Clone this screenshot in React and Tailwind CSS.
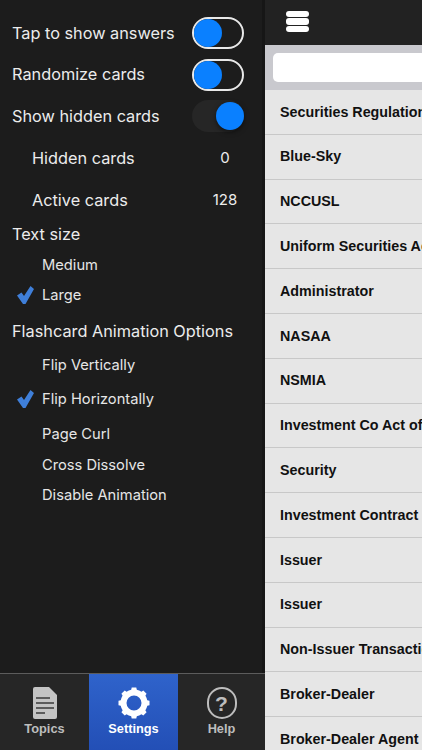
import React from 'react';

const topics = [
  'Securities Regulation',
  'Blue-Sky',
  'NCCUSL',
  'Uniform Securities Act',
  'Administrator',
  'NASAA',
  'NSMIA',
  'Investment Co Act of 1940',
  'Security',
  'Investment Contract',
  'Issuer',
  'Issuer',
  'Non-Issuer Transaction',
  'Broker-Dealer',
  'Broker-Dealer Agent',
];

const gearAngles = [0, 45, 90, 135, 180, 225, 270, 315];

const Toggle = ({ on }) =>
  on ? (
    <div className="relative h-[32px] w-[52px] rounded-full bg-[#262626]">
      <div className="absolute right-0 top-[2px] h-[28px] w-[28px] rounded-full bg-[#0a80ff] shadow-[0_2px_5px_rgba(0,0,0,0.5)]" />
    </div>
  ) : (
    <div className="relative h-[32px] w-[52px] rounded-full border-2 border-[#e8e8e8] bg-[#1c1c1c]">
      <div className="absolute left-0 top-0 h-[28px] w-[28px] rounded-full bg-[#0a80ff]" />
    </div>
  );

const Check = () => (
  <svg width="17" height="18" viewBox="0 0 17 18" className="absolute left-[17px] top-1/2 -translate-y-1/2">
    <path d="M0 9.5 L4.5 6.5 L7 10 L13.5 0 L17 3 L8.5 18 L6 18 Z" fill="#3f7fd9" />
  </svg>
);

const Option = ({ label, checked, className }) => (
  <div className={`relative flex items-center pl-[42px] text-[14.7px] text-[#e6e6e6] ${className}`}>
    {checked && <Check />}
    {label}
  </div>
);

const SwitchRow = ({ label, on, className }) => (
  <div className={`flex items-center justify-between pl-[12px] pr-[21px] ${className}`}>
    <span>{label}</span>
    <Toggle on={on} />
  </div>
);

const CountRow = ({ label, value, className }) => (
  <div className={`flex items-center pl-[32px] ${className}`}>
    <span className="flex-1">{label}</span>
    <span className="mr-[20px] w-[40px] text-center text-[15px]">{value}</span>
  </div>
);

const App = () => {
  return (
    <div className="flex h-[750px] w-[422px] overflow-hidden bg-[#1c1c1c] font-['Inter',sans-serif]">
      {/* Settings panel */}
      <div className="flex w-[265px] shrink-0 flex-col text-[16.3px] text-[#ececec] shadow-[inset_-3px_0_0_#161616]">
        <div className="flex-1 pt-[12px]">
          <SwitchRow label="Tap to show answers" className="h-[42px]" />
          <SwitchRow label="Randomize cards" className="h-[41px]" />
          <SwitchRow label="Show hidden cards" on className="h-[42px]" />
          <CountRow label="Hidden cards" value="0" className="h-[42px]" />
          <CountRow label="Active cards" value="128" className="h-[43px]" />
          <div className="flex h-[24px] items-center pl-[12px]">Text size</div>
          <Option label="Medium" className="h-[38px]" />
          <Option label="Large" checked className="h-[22px]" />
          <div className="mt-[13px] flex h-[24px] items-center pl-[12px]">Flashcard Animation Options</div>
          <Option label="Flip Vertically" className="mt-[10px] h-[24px]" />
          <Option label="Flip Horizontally" checked className="mt-[10px] h-[24px]" />
          <Option label="Page Curl" className="mt-[11px] h-[24px]" />
          <Option label="Cross Dissolve" className="mt-[7px] h-[24px]" />
          <Option label="Disable Animation" className="mt-[6px] h-[24px]" />
        </div>

        {/* Tab bar */}
        <div className="flex h-[77px] border-t border-[#5c5c5c] bg-[#262626] font-['Liberation_Sans',sans-serif] text-[12.8px] font-bold leading-[16px]">
          <div className="flex w-[89px] flex-col items-center pt-[13px] text-[#bdbdbd]">
            <svg width="24" height="32" viewBox="0 0 24 32">
              <path d="M2 0 H16 L24 8 V30 a2 2 0 0 1 -2 2 H2 a2 2 0 0 1 -2 -2 V2 a2 2 0 0 1 2 -2 Z" fill="#c4c4c4" />
              <path d="M3 11 H17 M3 16 H21 M3 21 H21 M3 26 H12" stroke="#3a3a3a" strokeWidth="1.6" />
            </svg>
            <span className="mt-[2px]">Topics</span>
          </div>
          <div className="flex w-[89px] flex-col items-center bg-gradient-to-b from-[#2f63cb] to-[#234fb6] pt-[13px] text-white">
            <svg width="32" height="32" viewBox="0 0 32 32">
              <circle cx="16" cy="16" r="10.5" fill="none" stroke="#fff" strokeWidth="6" />
              {gearAngles.map((angle) => (
                <path key={angle} d="M13 4 L13.7 0.5 H18.3 L19 4 Z" fill="#fff" transform={`rotate(${angle} 16 16)`} />
              ))}
            </svg>
            <span className="mt-[2px]">Settings</span>
          </div>
          <div className="flex w-[87px] flex-col items-center pt-[13px] text-[#bdbdbd]">
            <div className="flex h-[32px] w-[30px] items-center justify-center rounded-full border-2 border-[#bdbdbd] text-[21px] leading-none">
              ?
            </div>
            <span className="mt-[2px]">Help</span>
          </div>
        </div>
      </div>

      {/* Topics list, pushed partly off screen */}
      <div className="flex w-[320px] shrink-0 flex-col font-['Liberation_Sans',sans-serif]">
        <div className="flex h-[45px] shrink-0 items-center bg-[#222222] pb-[2px] pl-[21px]">
          <div className="flex w-[23px] flex-col gap-[1px]">
            <div className="h-[6.5px] rounded-[3px] bg-white" />
            <div className="h-[6.5px] rounded-[3px] bg-white" />
            <div className="h-[6.5px] rounded-[3px] bg-white" />
          </div>
        </div>
        <div className="h-[45px] shrink-0 bg-[#c9c9ce] pl-[8px] pt-[8px]">
          <div className="h-[29px] w-[300px] rounded-[5px] bg-white" />
        </div>
        {topics.map((topic, i) => (
          <div
            key={i}
            className="flex h-[44.8px] shrink-0 items-center whitespace-nowrap border-b border-[#c8c8c8] bg-[#e6e6e6] pl-[15px] pt-[1px] text-[14.3px] font-bold text-[#111]"
          >
            {topic}
          </div>
        ))}
      </div>
    </div>
  );
};

export default App;
